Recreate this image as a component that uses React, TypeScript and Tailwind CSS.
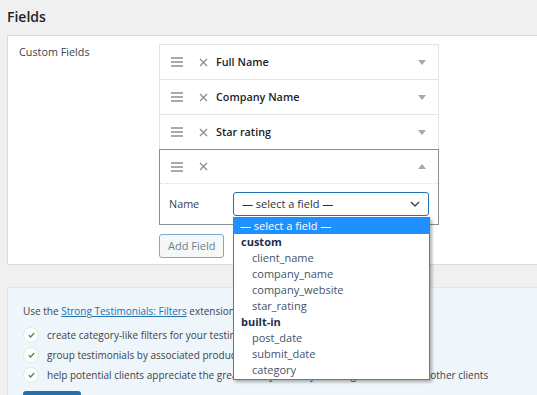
import React from "react";

const Grip = () => (
  <svg width="12" height="10" viewBox="0 0 12 10" className="shrink-0">
    <path d="M0 1h12M0 5h12M0 9h12" stroke="#8c8f94" strokeWidth="1.6" />
  </svg>
);

const Cross = () => (
  <svg width="9" height="9" viewBox="0 0 9 9" className="shrink-0">
    <path d="M1 1l7 7M8 1l-7 7" stroke="#8c8f94" strokeWidth="1.4" />
  </svg>
);

const Tri = ({ up = false }: { up?: boolean }) => (
  <svg width="8" height="5" viewBox="0 0 8 5" className="shrink-0">
    <path d={up ? "M0 5L4 0L8 5Z" : "M0 0L8 0L4 5Z"} fill="#a7aaad" />
  </svg>
);

const FieldRow = ({ label }: { label: string }) => (
  <div className="h-[36px] flex items-center border border-[#e2e4e7] -mt-px first:mt-0 bg-white pl-[11px] pr-[12px]">
    <Grip />
    <span className="ml-[16px]"><Cross /></span>
    <span className="ml-[8px] text-[10.8px] font-semibold text-[#1d2327]">{label}</span>
    <span className="ml-auto"><Tri /></span>
  </div>
);

const Check = ({ text }: { text: string }) => (
  <li className="flex items-center h-[20px]">
    <span className="w-[16px] h-[16px] rounded-full bg-white border border-[#e5e7eb] flex items-center justify-center shrink-0">
      <svg width="7" height="6" viewBox="0 0 7 6">
        <path d="M0.8 3.2l1.8 1.8L6.2 1" stroke="#3a9a48" strokeWidth="1.4" fill="none" />
      </svg>
    </span>
    <span className="ml-[8px] whitespace-nowrap">{text}</span>
  </li>
);

export default function App() {
  return (
    <div className="relative w-[537px] h-[395px] overflow-hidden bg-[#f0f0f1] text-[#3c434a] font-['Open_Sans',sans-serif] text-[11px]">
      <h2 className="px-[7px] pt-[6px] h-[35px] text-[14px] font-semibold text-[#1d2327]">Fields</h2>

      <div className="ml-[7px] w-[560px] bg-white border border-[#dcdcde] flex pt-[8px] pb-[6px]">
        <div className="w-[151px] pl-[11px] pt-[0px] text-[10.8px] text-[#3c434a]">Custom Fields</div>
        <div className="w-[280px]">
          <FieldRow label="Full Name" />
          <FieldRow label="Company Name" />
          <FieldRow label="Star rating" />
          <div className="-mt-px border border-[#8c8f94]">
            <div className="h-[34px] flex items-center pl-[11px] pr-[12px] border-b border-dotted border-[#dcdcde]">
              <Grip />
              <span className="ml-[16px]"><Cross /></span>
              <span className="ml-auto"><Tri up /></span>
            </div>
            <div className="h-[40px] flex items-center pl-[9px] pr-[9px]">
              <span className="w-[64px] text-[10.8px]">Name</span>
              <div className="flex-1 h-[24px] border border-[#2271b1] rounded-[3px] flex items-center pl-[8px] pr-[8px] text-[#2c3338]">
                <span>— select a field —</span>
                <svg width="10" height="6" viewBox="0 0 10 6" className="ml-auto">
                  <path d="M1 1l4 4 4-4" stroke="#3c434a" strokeWidth="1.4" fill="none" />
                </svg>
              </div>
            </div>
          </div>
          <button className="mt-[9px] h-[24px] px-[8px] border border-[#7fa8cc] rounded-[3px] bg-[#f6f7f7] text-[#6a8193]">
            Add Field
          </button>
        </div>
      </div>

      <div className="ml-[7px] mt-[22px] w-[560px] h-[120px] bg-[#eef6fb] border border-[#dde6ed] pl-[15px] pt-[16px] text-[10px]">
        <p className="leading-[14px]">
          Use the <a className="text-[#2271b1] underline">Strong Testimonials: Filters</a> extensions to:
        </p>
        <ul className="mt-[7px]">
          <Check text="create category-like filters for your testimonials" />
          <Check text="group testimonials by associated products, services or locations" />
          <Check text="help potential clients appreciate the great work you do by showing testimonials of other clients" />
        </ul>
        <div className="mt-[6px] w-[58px] h-[24px] rounded-[3px] bg-[#2271b1]" />
      </div>

      <div className="absolute left-[233px] top-[217px] w-[197px] bg-white border border-[#767676] shadow-[2px_2px_3px_rgba(0,0,0,0.3)] text-[11px] leading-[16px] pb-[1px]">
        <div className="bg-[#1e90ff] text-white px-[6px]">— select a field —</div>
        <div className="px-[7px] font-bold text-[#1d2f4d]">custom</div>
        {["client_name", "company_name", "company_website", "star_rating"].map((o) => (
          <div key={o} className="pl-[18px] text-[#44546a]">{o}</div>
        ))}
        <div className="px-[7px] font-bold text-[#1d2f4d]">built-in</div>
        {["post_date", "submit_date", "category"].map((o) => (
          <div key={o} className="pl-[18px] text-[#44546a]">{o}</div>
        ))}
      </div>
    </div>
  );
}
